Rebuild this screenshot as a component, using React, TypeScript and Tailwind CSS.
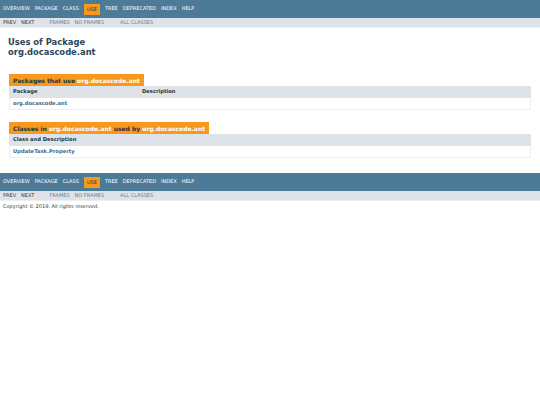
const topItems = ["OVERVIEW", "PACKAGE", "CLASS", "USE", "TREE", "DEPRECATED", "INDEX", "HELP"];

function TopNav() {
  return (
    <div className="h-[18px] bg-[#4d7a97] flex items-center pl-[3px] gap-[5px] text-[5px] text-white uppercase">
      {topItems.map((item) =>
        item === "USE" ? (
          <span key={item} className="bg-[#f8981d] text-[#253441] px-[3px] py-[3px] leading-none">
            {item}
          </span>
        ) : (
          <span key={item}>{item}</span>
        )
      )}
    </div>
  );
}

function SubNav() {
  return (
    <div className="h-[10px] bg-[#dee3e9] flex items-center pl-[3px] text-[5px] uppercase border-b border-[#eeeeee]">
      <span className="text-[#353833]">Prev</span>
      <span className="text-[#353833] ml-[5px]">Next</span>
      <span className="text-[#6a7f90] ml-[15px]">Frames</span>
      <span className="text-[#6a7f90] ml-[5px]">No Frames</span>
      <span className="text-[#6a7f90] ml-[16px]">All Classes</span>
    </div>
  );
}

function Caption({ children }: { children: React.ReactNode }) {
  return (
    <div className="flex">
      <div className="bg-[#f8981d] text-[#253441] font-bold text-[6px] h-[12px] flex items-center px-[4px]">
        {children}
      </div>
    </div>
  );
}

export default function App() {
  const link = "text-white";
  return (
    <div className="w-[540px] h-[405px] bg-white font-['DejaVu_Sans',sans-serif] text-[#353833]">
      <TopNav />
      <SubNav />
      <div className="px-[8px] pt-[10px] pb-[17px] text-[#2c4557] font-bold text-[8.4px] leading-[9.5px]">
        <div>Uses of Package</div>
        <div>org.docascode.ant</div>
      </div>
      <div className="pl-[9px] pr-[9px]">
        <Caption>
          Packages that use <span className={link}>&nbsp;org.docascode.ant</span>
        </Caption>
        <div className="flex h-[12px] items-center bg-[#dee3e9] text-[5.2px] font-bold text-[#253441]">
          <span className="pl-[4px] w-[133px]">Package</span>
          <span>Description</span>
        </div>
        <div className="flex h-[12px] items-center border border-t-0 border-[#eeeeee] text-[5.2px] font-bold text-[#4a6782]">
          <span className="pl-[3px]">org.docascode.ant</span>
        </div>

        <div className="mt-[12px]">
          <Caption>
            Classes in <span className={link}>&nbsp;org.docascode.ant&nbsp;</span> used by{" "}
            <span className={link}>&nbsp;org.docascode.ant</span>
          </Caption>
        </div>
        <div className="flex h-[12px] items-center bg-[#dee3e9] text-[5.2px] font-bold text-[#253441]">
          <span className="pl-[4px]">Class and Description</span>
        </div>
        <div className="flex h-[12px] items-center border border-t-0 border-[#eeeeee] text-[5.2px] font-bold text-[#4a6782]">
          <span className="pl-[3px]">UpdateTask.Property</span>
        </div>
      </div>
      <div className="mt-[15px]">
        <TopNav />
        <SubNav />
      </div>
      <div className="pl-[3px] pt-[2px] text-[5px] text-[#353833]">Copyright © 2019. All rights reserved.</div>
    </div>
  );
}
